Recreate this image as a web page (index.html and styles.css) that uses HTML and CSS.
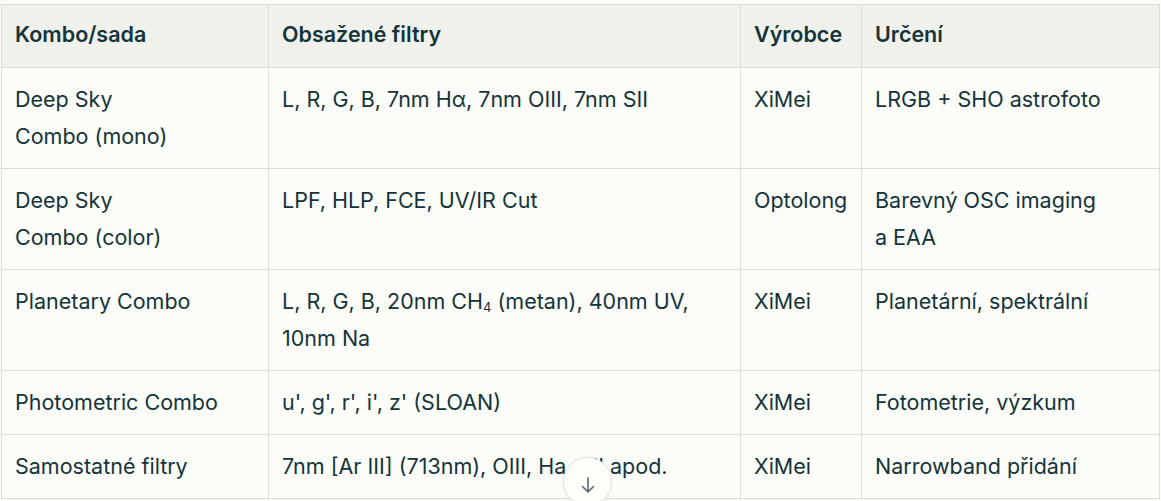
FILE: index.html
```html
<!DOCTYPE html>
<html lang="cs">
<head>
<meta charset="utf-8">
<title>Filtry</title>
<link rel="stylesheet" href="styles.css">
</head>
<body>
<div class="wrap">
  <table class="tbl">
    <colgroup>
      <col class="c1"><col class="c2"><col class="c3"><col class="c4">
    </colgroup>
    <thead>
      <tr><th>Kombo/sada</th><th>Obsažené filtry</th><th>Výrobce</th><th>Určení</th></tr>
    </thead>
    <tbody>
      <tr><td>Deep Sky<br>Combo (mono)</td><td>L, R, G, B, 7nm Hα, 7nm OIII, 7nm SII</td><td>XiMei</td><td>LRGB + SHO astrofoto</td></tr>
      <tr><td>Deep Sky<br>Combo (color)</td><td>LPF, HLP, FCE, UV/IR Cut</td><td>Optolong</td><td>Barevný OSC imaging<br>a EAA</td></tr>
      <tr><td>Planetary Combo</td><td><span class="nw">L, R, G, B, 20nm CH<sub>4</sub> (metan), 40nm UV,</span><br>10nm Na</td><td>XiMei</td><td>Planetární, spektrální</td></tr>
      <tr><td>Photometric Combo</td><td>u', g', r', i', z' (SLOAN)</td><td>XiMei</td><td>Fotometrie, výzkum</td></tr>
      <tr><td>Samostatné filtry</td><td>7nm [Ar III] (713nm), OIII, Ha, SII apod.</td><td>XiMei</td><td>Narrowband přidání</td></tr>
    </tbody>
  </table>
  <button class="scroll-btn" aria-label="Posunout dolů">
    <svg class="arrow" width="18" height="18" viewBox="0 0 18 18" fill="none" stroke="#56676a" stroke-width="1.6" stroke-linecap="round" stroke-linejoin="round"><path d="M9 2v14M3.5 10.5 9 16l5.5-5.5"/></svg>
  </button>
</div>
</body>
</html>
```
FILE: styles.css
```css
html, body {
  margin: 0;
  padding: 0;
  background: #fbfbf7;
  height: 100%;
  overflow: hidden;
}
body {
  font-family: "Inter", "Liberation Sans", sans-serif;
  color: #13343b;
}
.wrap {
  position: relative;
  padding: 4px 2px 0 1px;
}
.tbl {
  width: 1158px;
  border-collapse: collapse;
  table-layout: fixed;
  font-size: 21.5px;
  line-height: 37px;
  background: #fcfcf8;
}
.c1 { width: 267px; }
.c2 { width: 472px; }
.c3 { width: 121px; }
.c4 { width: 298px; }
.tbl th, .tbl td {
  border: 1px solid #dddcd6;
  text-align: left;
  vertical-align: top;
  padding: 13px 14px 13px 13px;
}
.tbl th {
  background: #f1f1ec;
  font-weight: 600;
  padding-top: 11px;
  padding-bottom: 14px;
}
.nw { white-space: nowrap; }
.tbl td sub {
  font-size: 13px;
  line-height: 0;
  vertical-align: -3px;
}
.scroll-btn {
  position: absolute;
  left: 563px;
  top: 457px;
  width: 49px;
  height: 49px;
  border-radius: 50%;
  border: 1px solid #e4e3dd;
  background: #fdfdfa;
  box-shadow: 0 1px 4px rgba(0,0,0,0.06);
  display: flex;
  align-items: flex-start;
  justify-content: center;
  padding: 18px 0 0 0;
}
```
